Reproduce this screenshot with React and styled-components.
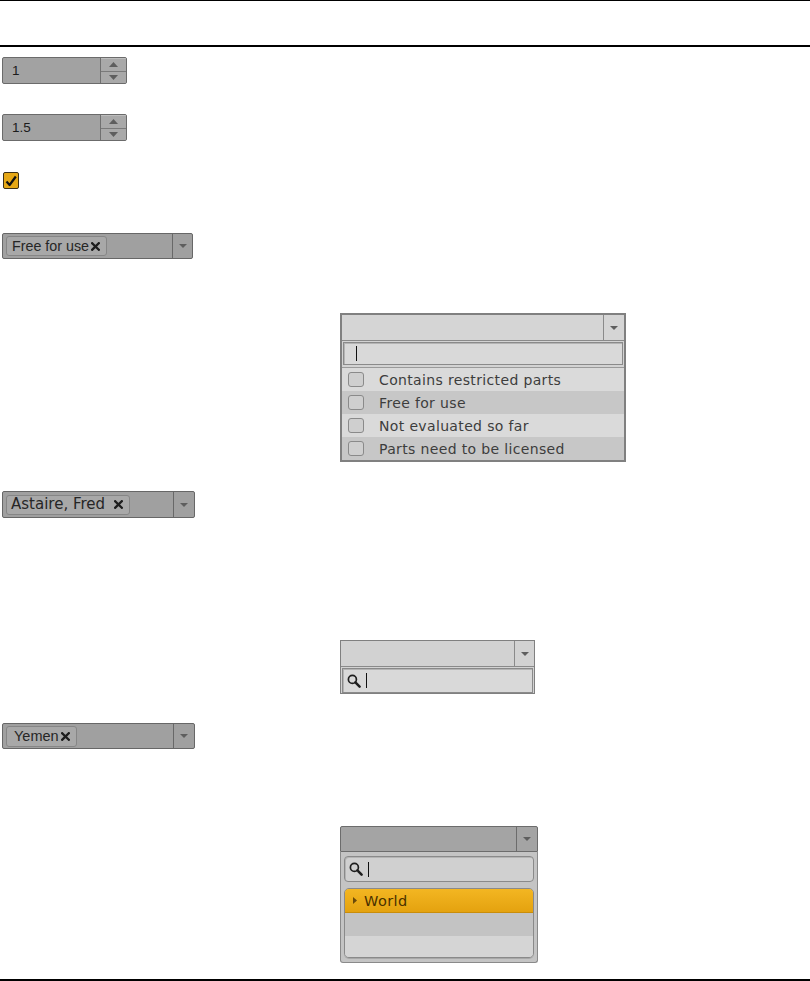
import React from 'react';
import styled, { createGlobalStyle } from 'styled-components';

const Global = createGlobalStyle`
  html, body { margin: 0; padding: 0; background: #fff; }
  body { font-family: "Liberation Sans", Arial, sans-serif; }
  * { box-sizing: border-box; }
`;

const Page = styled.div`
  height: 981px;
  display: flex;
  flex-direction: column;
  border-top: 1px solid #000;
`;

const HeaderRow = styled.div`
  flex: none;
  height: 46px;
  border-bottom: 2px solid #000;
`;

const Body = styled.div`
  flex: 1;
  display: flex;
  flex-direction: column;
  align-items: flex-start;
  padding-left: 2px;
  border-bottom: 2px solid #000;
`;

const Item = styled.div`
  margin-top: ${p => p.$top}px;
  margin-left: ${p => p.$left || 0}px;
`;

/* ---------- small glyphs ---------- */
const Tri = ({ dir = 'down', color = '#5e5e5e', w = 9, h = 5 }) => (
  <svg width={w} height={h} viewBox={`0 0 ${w} ${h}`}>
    {dir === 'down' && <polygon points={`0,0 ${w},0 ${w / 2},${h}`} fill={color} />}
    {dir === 'up' && <polygon points={`0,${h} ${w},${h} ${w / 2},0`} fill={color} />}
    {dir === 'right' && <polygon points={`0,0 ${w},${h / 2} 0,${h}`} fill={color} />}
  </svg>
);

const XIcon = () => (
  <svg width="9" height="9" viewBox="0 0 9 9">
    <path d="M1.2 1.2 L7.8 7.8 M7.8 1.2 L1.2 7.8" stroke="#1e1e1e" strokeWidth="2.3" strokeLinecap="square" />
  </svg>
);

const Magnifier = () => (
  <svg width="14" height="14" viewBox="0 0 14 14">
    <circle cx="5.4" cy="5.4" r="4" fill="none" stroke="#1e1e1e" strokeWidth="1.7" />
    <path d="M8.4 8.4 L12.6 12.6" stroke="#1e1e1e" strokeWidth="2.5" strokeLinecap="round" />
  </svg>
);

const Caret = styled.span`
  display: inline-block;
  width: 1px;
  height: 15px;
  background: #111;
`;

/* ---------- spinner ---------- */
const Spinner = styled.div`
  display: flex;
  width: 125px;
  height: 27px;
  border: 1px solid #6b6b6b;
  border-radius: 2px;
  background: #a2a2a2;
  overflow: hidden;
`;

const SpinValue = styled.div`
  flex: 1;
  display: flex;
  align-items: center;
  padding-left: 9px;
  font-size: 13.5px;
  color: #1c1c1c;
`;

const SpinButtons = styled.div`
  width: 26px;
  display: flex;
  flex-direction: column;
  border-left: 1px solid #707070;
`;

const SpinBtn = styled.div`
  flex: 1;
  display: flex;
  align-items: center;
  justify-content: center;
  background: #a9a9a9;
  border-top: 1px solid #bdbdbd;
  & + & {
    border-top: 1px solid #7a7a7a;
  }
`;

/* ---------- checkbox ---------- */
const CheckBox = styled.div`
  width: 16px;
  height: 17px;
  margin-left: 1px;
  border: 1px solid #3c3118;
  border-radius: 2px;
  background: #e6a816;
  display: flex;
  align-items: center;
  justify-content: center;
`;

/* ---------- tag select ---------- */
const TagSelect = styled.div`
  display: flex;
  width: ${p => p.$w}px;
  height: ${p => p.$h}px;
  border: 1px solid #676767;
  border-radius: 2px;
  background: #a0a0a0;
`;

const TagArea = styled.div`
  flex: 1;
  display: flex;
  align-items: center;
  padding-left: 3px;
`;

const Chip = styled.div`
  display: flex;
  align-items: center;
  height: ${p => p.$h || 20}px;
  padding: 0 ${p => p.$pr}px 0 ${p => p.$pl}px;
  gap: ${p => p.$gap}px;
  border: 1px solid #868686;
  border-radius: 3px;
  background: #a8a8a8;
  color: #262626;
  font-family: ${p => (p.$wide ? '"DejaVu Sans", Verdana, sans-serif' : '"Liberation Sans", Arial, sans-serif')};
  font-size: ${p => p.$fs}px;
  line-height: 1;
`;

const DropBtn = styled.div`
  width: ${p => p.$w}px;
  flex: none;
  display: flex;
  align-items: center;
  justify-content: center;
  border-left: 1px solid ${p => p.$line || '#686868'};
`;

/* ---------- dropdown panels ---------- */
const Panel = styled.div`
  width: ${p => p.$w}px;
  display: flex;
  flex-direction: column;
  border: ${p => p.$bw || 1}px solid #808080;
  background: #d3d3d3;
`;

const PanelHead = styled.div`
  display: flex;
  height: ${p => p.$h}px;
  background: ${p => p.$bg || '#d5d5d5'};
  border-bottom: 1px solid #8a8a8a;
`;

const HeadFill = styled.div`
  flex: 1;
`;

const SearchRow = styled.div`
  padding: ${p => p.$pad || '1px 1px'};
`;

const SearchBox = styled.div`
  height: ${p => p.$h}px;
  display: flex;
  align-items: center;
  gap: 5px;
  padding-left: ${p => p.$pl}px;
  border: 1px solid #8a8a8a;
  border-radius: ${p => p.$r || 0}px;
  background: ${p => p.$bg || '#d9d9d9'};
  box-shadow: inset 1px 1px 0 #b4b4b4;
`;

const OptionList = styled.div`
  border-top: 1px solid #9a9a9a;
  display: flex;
  flex-direction: column;
`;

const Option = styled.div`
  height: 23px;
  display: flex;
  align-items: center;
  padding-left: 6px;
  gap: 15px;
  background: ${p => (p.$alt ? '#c7c7c7' : '#dadada')};
  font-family: "DejaVu Sans", Verdana, sans-serif;
  font-size: 14px;
  letter-spacing: 0.35px;
  color: #3d3d3d;
`;

const OptBox = styled.span`
  width: 16px;
  height: 15px;
  border: 1px solid #8a8a8a;
  border-radius: 3px;
  background: #cfcfcf;
  flex: none;
`;

/* panel 3 pieces */
const TreeWrap = styled.div`
  width: 198px;
`;

const TreeHead = styled.div`
  display: flex;
  height: 26px;
  background: #a4a4a4;
  border: 1px solid #6c6c6c;
  border-radius: 2px 2px 0 0;
`;

const TreeBody = styled.div`
  display: flex;
  flex-direction: column;
  gap: 6px;
  padding: 4px 3px 4px 3px;
  background: #c4c4c4;
  border: 1px solid #8a8a8a;
  border-top: none;
  border-radius: 0 0 3px 3px;
`;

const TreeList = styled.div`
  display: flex;
  flex-direction: column;
  border: 1px solid #8a8a8a;
  border-radius: 5px;
  overflow: hidden;
  box-shadow: 0 1px 0 #a8a8a8;
`;

const TreeRow = styled.div`
  height: ${p => p.$h}px;
  display: flex;
  align-items: center;
  gap: 7px;
  padding-left: 8px;
  background: ${p => p.$bg};
  border-bottom: ${p => (p.$sel ? '1px solid #c98d0a' : 'none')};
  font-family: "DejaVu Sans", Verdana, sans-serif;
  font-size: 14.5px;
  letter-spacing: 0.4px;
  color: #4a3100;
`;

export default function App() {
  return (
    <>
      <Global />
      <Page>
        <HeaderRow />
        <Body>
          <Item $top={10}>
            <Spinner>
              <SpinValue>1</SpinValue>
              <SpinButtons>
                <SpinBtn><Tri dir="up" w={9} h={5} /></SpinBtn>
                <SpinBtn><Tri dir="down" w={9} h={5} /></SpinBtn>
              </SpinButtons>
            </Spinner>
          </Item>

          <Item $top={30}>
            <Spinner>
              <SpinValue>1.5</SpinValue>
              <SpinButtons>
                <SpinBtn><Tri dir="up" w={9} h={5} /></SpinBtn>
                <SpinBtn><Tri dir="down" w={9} h={5} /></SpinBtn>
              </SpinButtons>
            </Spinner>
          </Item>

          <Item $top={31}>
            <CheckBox>
              <svg width="12" height="12" viewBox="0 0 12 12">
                <path d="M1.5 6.5 L4.6 10 L10.8 1.5" fill="none" stroke="#111" strokeWidth="2.2" strokeLinejoin="round" />
              </svg>
            </CheckBox>
          </Item>

          <Item $top={44}>
            <TagSelect $w={191} $h={26}>
              <TagArea>
                <Chip $pl={5} $pr={6} $gap={2} $fs={14.3}>
                  Free for use<XIcon />
                </Chip>
              </TagArea>
              <DropBtn $w={20}><Tri dir="down" w={8} h={4} /></DropBtn>
            </TagSelect>
          </Item>

          <Item $top={54} $left={338}>
            <Panel $w={286} $bw={2}>
              <PanelHead $h={26}>
                <HeadFill />
                <DropBtn $w={21} $line="#8a8a8a"><Tri dir="down" w={8} h={4} /></DropBtn>
              </PanelHead>
              <SearchRow $pad="1px 1px 2px 1px">
                <SearchBox $h={23} $pl={12}><Caret /></SearchBox>
              </SearchRow>
              <OptionList>
                <Option><OptBox />Contains restricted parts</Option>
                <Option $alt><OptBox />Free for use</Option>
                <Option><OptBox />Not evaluated so far</Option>
                <Option $alt><OptBox />Parts need to be licensed</Option>
              </OptionList>
            </Panel>
          </Item>

          <Item $top={29}>
            <TagSelect $w={193} $h={27}>
              <TagArea>
                <Chip $h={20} $pl={4} $pr={6} $gap={9} $fs={15} $wide>
                  Astaire, Fred<XIcon />
                </Chip>
              </TagArea>
              <DropBtn $w={21}><Tri dir="down" w={8} h={4} /></DropBtn>
            </TagSelect>
          </Item>

          <Item $top={122} $left={338}>
            <Panel $w={195}>
              <PanelHead $h={26} $bg="#d2d2d2">
                <HeadFill />
                <DropBtn $w={20} $line="#8a8a8a"><Tri dir="down" w={8} h={4} /></DropBtn>
              </PanelHead>
              <SearchRow $pad="1px 1px 0 1px">
                <SearchBox $h={25} $pl={4}>
                  <Magnifier />
                  <Caret />
                </SearchBox>
              </SearchRow>
            </Panel>
          </Item>

          <Item $top={29}>
            <TagSelect $w={193} $h={26}>
              <TagArea>
                <Chip $h={21} $pl={7} $pr={6} $gap={2} $fs={14.5}>
                  Yemen<XIcon />
                </Chip>
              </TagArea>
              <DropBtn $w={21}><Tri dir="down" w={8} h={4} /></DropBtn>
            </TagSelect>
          </Item>

          <Item $top={77} $left={338}>
            <TreeWrap>
              <TreeHead>
                <HeadFill />
                <DropBtn $w={21} $line="#6c6c6c"><Tri dir="down" w={8} h={4} /></DropBtn>
              </TreeHead>
              <TreeBody>
                <SearchBox $h={26} $pl={4} $r={4} $bg="#d0d0d0">
                  <Magnifier />
                  <Caret />
                </SearchBox>
                <TreeList>
                  <TreeRow $h={24} $sel $bg="linear-gradient(#f3b622, #e4a20f)">
                    <Tri dir="right" w={4} h={7} color="#6a4a0a" />
                    World
                  </TreeRow>
                  <TreeRow $h={23} $bg="#c3c3c3" />
                  <TreeRow $h={21} $bg="#d5d5d5" />
                </TreeList>
              </TreeBody>
            </TreeWrap>
          </Item>
        </Body>
      </Page>
    </>
  );
}
